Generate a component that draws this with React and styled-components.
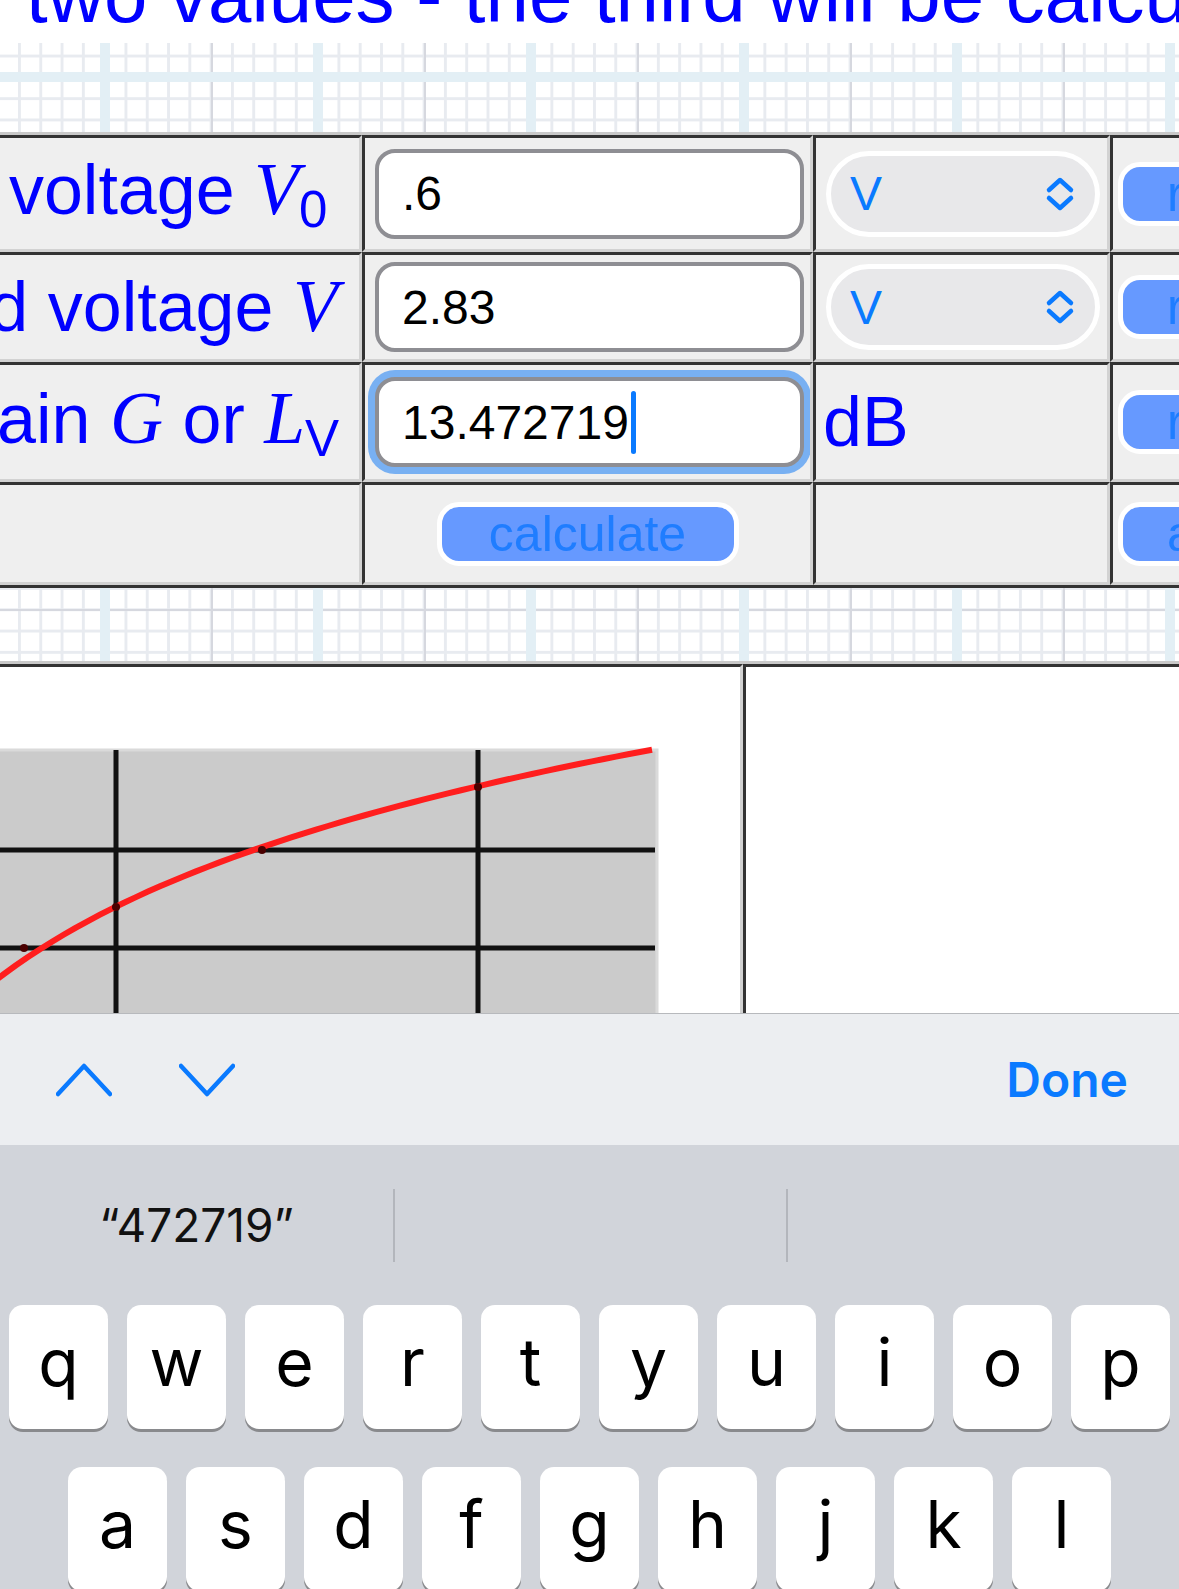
import styled, { createGlobalStyle } from "styled-components";

const GlobalStyle = createGlobalStyle`
  html, body {
    margin: 0;
    padding: 0;
    background: #fff;
  }
  body {
    font-family: "Liberation Sans", Arial, sans-serif;
    overflow: hidden;
  }
`;

// graph paper page background
const Screen = styled.div`
  width: 1179px;
  height: 1589px;
  overflow: hidden;
  display: flex;
  flex-direction: column;
  background-color: #fff;
  background-image:
    linear-gradient(90deg, #e3eff5 0 10px, transparent 10px),
    linear-gradient(180deg, #e3eff5 0 10px, transparent 10px),
    linear-gradient(90deg, #d6d8df 0 2px, transparent 2px),
    linear-gradient(180deg, #d6d8df 0 2px, transparent 2px),
    linear-gradient(90deg, #e8ebf0 0 3px, transparent 3px),
    linear-gradient(180deg, #e8ebf0 0 3px, transparent 3px);
  background-size: 213px 100%, 100% 213px, 213px 100%, 100% 213px, 21.3px 100%, 100% 21.3px;
  background-position: 100px 0, 0 72px, 211px 0, 0 183px, 18px 0, 0 12px;
`;

const TitleBar = styled.div`
  flex: none;
  height: 43px;
  background: #fff;
  overflow: hidden;
`;

const Title = styled.h2`
  margin: -44px 0 0 26px;
  font: 400 78px/1 "Liberation Sans", Arial, sans-serif;
  color: #0000ff;
  white-space: nowrap;
`;

const Band = styled.div`
  flex: none;
  height: ${p => p.$h}px;
`;

const CalcTable = styled.div`
  flex: none;
  align-self: flex-start;
  margin-left: -330px;
  display: grid;
  grid-template-columns: 689px 451px 297px 320px;
  grid-template-rows: 117px 110px 120px 103px;
  border: 3px solid;
  border-color: #c9c9c9 #333 #333 #c9c9c9;
`;

const Cell = styled.div`
  box-sizing: border-box;
  border: 3px solid;
  border-color: #333 #d2d2d2 #d2d2d2 #333;
  background: #efefef;
  display: flex;
  align-items: center;
  justify-content: ${p => (p.$center ? "center" : "flex-start")};
  padding-left: ${p => p.$pad || 0}px;
  overflow: hidden;
  white-space: nowrap;
`;

const Label = styled.span`
  font: 400 70px "Liberation Sans", Arial, sans-serif;
  color: #0000ff;
`;

const Var = styled.i`
  font-family: "Liberation Serif", "Times New Roman", serif;
  font-size: 1.05em;
`;

const Sub = styled.sub`
  font-size: 0.73em;
  vertical-align: -0.25em;
`;

const Unit = styled.span`
  font: 400 70px "Liberation Sans", Arial, sans-serif;
  color: #0000ff;
`;

const Field = styled.div`
  box-sizing: border-box;
  width: 429px;
  height: 90px;
  border: 4px solid #8e8e93;
  border-radius: 20px;
  background: #fff;
  padding-left: 23px;
  display: flex;
  align-items: center;
  font: 400 48px "Liberation Sans", Arial, sans-serif;
  color: #000;
  box-shadow: ${p => (p.$focused ? "0 0 0 7px #78b0f2" : "none")};
`;

const Caret = styled.span`
  width: 5px;
  height: 63px;
  margin-left: 2px;
  border-radius: 3px;
  background: #0a7aff;
`;

const Select = styled.div`
  box-sizing: border-box;
  width: 274px;
  height: 86px;
  border: 5px solid #fff;
  border-radius: 43px;
  background: #e8e8ea;
  display: flex;
  align-items: center;
  justify-content: space-between;
  padding: 0 20px 0 19px;
  color: #0a7aff;
  font: 400 48px "Liberation Sans", Arial, sans-serif;
`;

const Button = styled.button`
  box-sizing: border-box;
  width: ${p => (p.$width ? `${p.$width}px` : "auto")};
  height: 64px;
  padding: 0 ${p => p.$padX || 0}px;
  border: 5px solid #fff;
  border-radius: 22px;
  background: #6699ff;
  color: #1f7dff;
  font: 400 50px/1 "Liberation Sans", Arial, sans-serif;
  text-align: ${p => (p.$width ? "center" : "left")};
  white-space: nowrap;
`;

const GraphArea = styled.div`
  flex: 1;
  min-height: 0;
  overflow: hidden;
`;

const GraphTable = styled.div`
  margin-left: -6px;
  width: max-content;
  height: 500px;
  display: grid;
  grid-template-columns: 746px 500px;
  border: 3px solid;
  border-color: #c9c9c9 #333 #333 #c9c9c9;
`;

const GraphCell = styled.div`
  box-sizing: border-box;
  border: 3px solid;
  border-color: #333 #d2d2d2 #d2d2d2 #333;
  background: #fff;
  overflow: hidden;
`;

const AccessoryBar = styled.div`
  flex: none;
  box-sizing: border-box;
  height: 132px;
  border-top: 1px solid #b7b9bd;
  background: #eceef1;
  display: flex;
  align-items: center;
  padding: 0 51px 0 56px;
`;

const NavButtons = styled.div`
  display: flex;
  align-items: center;
  gap: 67px;
`;

const Done = styled.span`
  margin-left: auto;
  font: 600 48px "Inter", "Noto Sans", sans-serif;
  color: #0a7aff;
`;

const Keyboard = styled.div`
  flex: none;
  height: 444px;
  overflow: hidden;
  background: #d1d4da;
  display: flex;
  flex-direction: column;
`;

const Suggestions = styled.div`
  flex: none;
  height: 160px;
  display: grid;
  grid-template-columns: repeat(3, 1fr);
  align-items: center;
`;

const Suggestion = styled.div`
  height: 73px;
  display: flex;
  align-items: center;
  justify-content: center;
  border-left: ${p => (p.$divider ? "2px solid #b3b6bc" : "none")};
  font: 400 46px "Inter", "Noto Sans", sans-serif;
  color: #111;
`;

const KeyRow = styled.div`
  flex: none;
  display: flex;
  justify-content: center;
  gap: 19px;
  margin-bottom: 38px;
`;

const Key = styled.div`
  box-sizing: border-box;
  width: 99px;
  height: 124px;
  padding-bottom: 10px;
  border-radius: 14px;
  background: #fff;
  box-shadow: 0 3px 0 #898a8d;
  display: flex;
  align-items: center;
  justify-content: center;
  font: 400 66px "Inter", "Noto Sans", sans-serif;
  color: #000;
`;

function UpDown() {
  return (
    <svg width="30" height="36" viewBox="0 0 30 36" fill="none" stroke="#0a7aff" strokeWidth="4.5" strokeLinecap="round" strokeLinejoin="round">
      <path d="M4 14 L15 4 L26 14" />
      <path d="M4 22 L15 32 L26 22" />
    </svg>
  );
}

function Chevron({ down }) {
  return (
    <svg width="56" height="34" viewBox="0 0 56 34" fill="none" stroke="#0a7aff" strokeWidth="4.5" strokeLinecap="round" strokeLinejoin="round">
      <path d={down ? "M2 3 L28 31 L54 3" : "M2 31 L28 3 L54 31"} />
    </svg>
  );
}

// log curve fitted to the plot in the screenshot
const curvePath = Array.from({ length: 57 }, (_, i) => {
  const x = -20 + i * 12;
  const y = 1185.4 - 163 * Math.log(x + 215);
  return `${i ? "L" : "M"}${x.toFixed(1)},${y.toFixed(1)}`;
}).join(" ");

function Graph() {
  return (
    <svg width="740" height="400" viewBox="0 0 740 400">
      <rect x="-10" y="83" width="667" height="330" fill="#cbcbcb" stroke="#dadada" strokeWidth="3" />
      <g stroke="#111" strokeWidth="5">
        <line x1="116" y1="83" x2="116" y2="400" />
        <line x1="478" y1="83" x2="478" y2="400" />
        <line x1="-10" y1="183" x2="655" y2="183" />
        <line x1="-10" y1="281" x2="655" y2="281" />
      </g>
      <path d={curvePath} fill="none" stroke="#ff1e1e" strokeWidth="6" strokeLinejoin="round" />
      <g fill="#4a0000">
        <circle cx="116" cy="240" r="4" />
        <circle cx="262" cy="183" r="4" />
        <circle cx="478" cy="120" r="4" />
        <circle cx="24" cy="281" r="4" />
      </g>
    </svg>
  );
}

const rowOne = ["q", "w", "e", "r", "t", "y", "u", "i", "o", "p"];
const rowTwo = ["a", "s", "d", "f", "g", "h", "j", "k", "l"];

export default function App() {
  return (
    <Screen>
      <GlobalStyle />
      <TitleBar>
        <Title>two values - the third will be calculated</Title>
      </TitleBar>
      <Band $h={89} />

      <CalcTable>
        <Cell $pad={41}>
          <Label>Supplied voltage <Var>V</Var><Sub>0</Sub></Label>
        </Cell>
        <Cell $pad={10}>
          <Field>.6</Field>
        </Cell>
        <Cell $pad={10}>
          <Select>V<UpDown /></Select>
        </Cell>
        <Cell $pad={5}>
          <Button $padX={44}>reset</Button>
        </Cell>

        <Cell $pad={41}>
          <Label>Measured voltage <Var>V</Var></Label>
        </Cell>
        <Cell $pad={10}>
          <Field>2.83</Field>
        </Cell>
        <Cell $pad={10}>
          <Select>V<UpDown /></Select>
        </Cell>
        <Cell $pad={5}>
          <Button $padX={44}>reset</Button>
        </Cell>

        <Cell $pad={41}>
          <Label>Overall gain <Var>G</Var> or <Var>L</Var><Sub>V</Sub></Label>
        </Cell>
        <Cell $pad={10}>
          <Field $focused>13.472719<Caret /></Field>
        </Cell>
        <Cell $pad={7}>
          <Unit>dB</Unit>
        </Cell>
        <Cell $pad={5}>
          <Button $padX={44}>reset</Button>
        </Cell>

        <Cell />
        <Cell $center>
          <Button $width={302}>calculate</Button>
        </Cell>
        <Cell />
        <Cell $pad={5}>
          <Button $padX={44}>all reset</Button>
        </Cell>
      </CalcTable>

      <Band $h={73} />

      <GraphArea>
        <GraphTable>
          <GraphCell>
            <Graph />
          </GraphCell>
          <GraphCell />
        </GraphTable>
      </GraphArea>

      <AccessoryBar>
        <NavButtons>
          <Chevron />
          <Chevron down />
        </NavButtons>
        <Done>Done</Done>
      </AccessoryBar>

      <Keyboard>
        <Suggestions>
          <Suggestion>“472719”</Suggestion>
          <Suggestion $divider />
          <Suggestion $divider />
        </Suggestions>
        <KeyRow>
          {rowOne.map(k => <Key key={k}>{k}</Key>)}
        </KeyRow>
        <KeyRow>
          {rowTwo.map(k => <Key key={k}>{k}</Key>)}
        </KeyRow>
      </Keyboard>
    </Screen>
  );
}
